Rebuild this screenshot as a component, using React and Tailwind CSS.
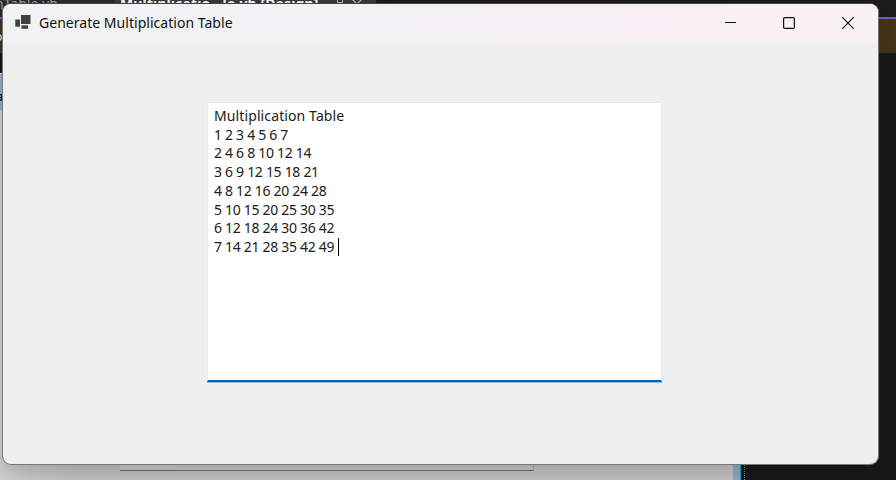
const ROWS = [1, 2, 3, 4, 5, 6, 7];

function Backdrop() {
  return (
    <div className="flex h-[480px] w-[896px] flex-col bg-[#1c1c1c]">
      <div className="flex h-[17px] shrink-0 overflow-hidden whitespace-nowrap text-[13px] leading-[17px]">
        <div className="h-[17px] w-[115px] overflow-hidden bg-[#2b2b2b] text-[#a0a0a0]">
          <div className="-mt-[5px] -ml-[5px] text-[14px]">nTable.vb</div>
        </div>
        <div className="flex w-[261px] bg-[#3a3a3a] pl-[5px] text-white">
          <span className="-mt-[5px] w-[217px] text-[14px] font-bold tracking-[0.14px]">Multiplicatio...le.vb [Design]</span>
          <svg className="h-3 w-9 text-[#b8b8b8]" viewBox="0 0 36 12" fill="none" stroke="currentColor">
            <path d="M-1 2.500H6M0.500 -3V2.500M5.500 -3V5" />
            <path d="M14.500 -1.500L26 10M25.500 -1.500L14 10" strokeWidth="1.300" />
          </svg>
        </div>
      </div>
      <div className="h-[2px] shrink-0 bg-[#6c5bd2]" />
      <div className="h-[34px] shrink-0 bg-[#453519]">
        <div className="-ml-[5px] pt-[9px] text-[12px] leading-[18px] text-white">o</div>
      </div>
      <div className="flex min-h-0 grow">
        <div className="flex w-[733px] flex-col">
          <div className="h-5 bg-[#181818]" />
          <div className="h-[37px] overflow-hidden border-t border-[#eeeeee] bg-[#94afd0] pt-[12px] text-[13px] leading-5 text-black">
            <span className="-ml-[4px]">a</span>
          </div>
          <div className="grow bg-gradient-to-r from-[#d2d2d2] via-[#c4c4c4] via-10% to-[#c6c6c6] pl-[120px]">
            <div className="h-[361px] w-[414px] border-r border-b border-[#6c6c6c] border-r-[#aaaaaa] bg-[#c8c8c8]" />
          </div>
        </div>
        <div className="w-[7px] bg-[#98aabf]" />
        <div className="w-px bg-[#18a6c7]" />
        <div className="flex grow bg-[#191919] pl-[3px]">
          <div className="w-px border-l border-dotted border-[#777777]" />
        </div>
      </div>
    </div>
  );
}

function TitleBar() {
  return (
    <div className="flex h-[39px] shrink-0 items-center bg-gradient-to-r from-[#f2f2f4] from-40% via-[#f7eff4] via-72% to-[#f9f0f0] to-90% pb-[2px]">
      <svg className="ml-3 h-[15px] w-4 shrink-0" viewBox="0 0 16 15" fill="#414141">
        <rect x="0.300" y="4.500" width="4.700" height="7.200" />
        <rect x="6" y="0" width="9.500" height="9" />
        <rect x="6.500" y="10.300" width="6.500" height="3.500" />
      </svg>
      <h1 className="ml-2 grow whitespace-nowrap text-[14px] leading-5 font-normal tracking-[0.030px] text-[#111111]">Generate Multiplication Table</h1>
      <div className="mr-6 flex items-center gap-[47px] text-[#111111]">
        <svg className="h-3 w-3" viewBox="0 0 12 12" fill="none" stroke="currentColor">
          <path d="M1 5.500H12.500" />
        </svg>
        <svg className="h-3 w-3" viewBox="0 0 12 12" fill="none" stroke="currentColor" strokeWidth="1.200">
          <rect x="0.600" y="0.600" width="10.800" height="10.800" rx="1.200" />
        </svg>
        <svg className="h-3 w-3" viewBox="0 0 12 12" fill="none" stroke="currentColor" strokeWidth="1.200">
          <path d="M0.300 0.300L11.700 11.700M11.700 0.300L0.300 11.700" />
        </svg>
      </div>
    </div>
  );
}

export default function App() {
  return (
    <div className="relative h-[480px] w-[896px] overflow-hidden font-['Noto_Sans','Open_Sans',sans-serif]">
      <Backdrop />
      <main className="absolute top-[3px] left-[2px] flex h-[462px] w-[877px] flex-col overflow-hidden rounded-[9px] border border-[#777777] border-t-[#444444] bg-[#efefef] shadow-[0_8px_24px_rgba(0,0,0,0.2)]">
        <TitleBar />
        <div className="flex grow justify-start pt-[59px] pl-[204px]">
          <div className="flex h-[280px] w-[455px] flex-col border border-b-[2px] border-[#e8e8e8] border-b-[#0067c0] bg-white pt-[4px] pl-[6px] text-[14px] leading-[18.700px] text-[#202020] shadow-[0_1px_0_#8dbbe0]">
            <p className="whitespace-nowrap tracking-[0.110px]">Multiplication Table</p>
            {ROWS.map((row) => (
              <div key={row} className="flex items-center whitespace-pre tracking-[-0.300px]">
                {ROWS.map((col) => row * col).join(" ")}
                {row === 7 && <span className="ml-1 h-[18px] w-px bg-black" />}
              </div>
            ))}
          </div>
        </div>
      </main>
    </div>
  );
}
